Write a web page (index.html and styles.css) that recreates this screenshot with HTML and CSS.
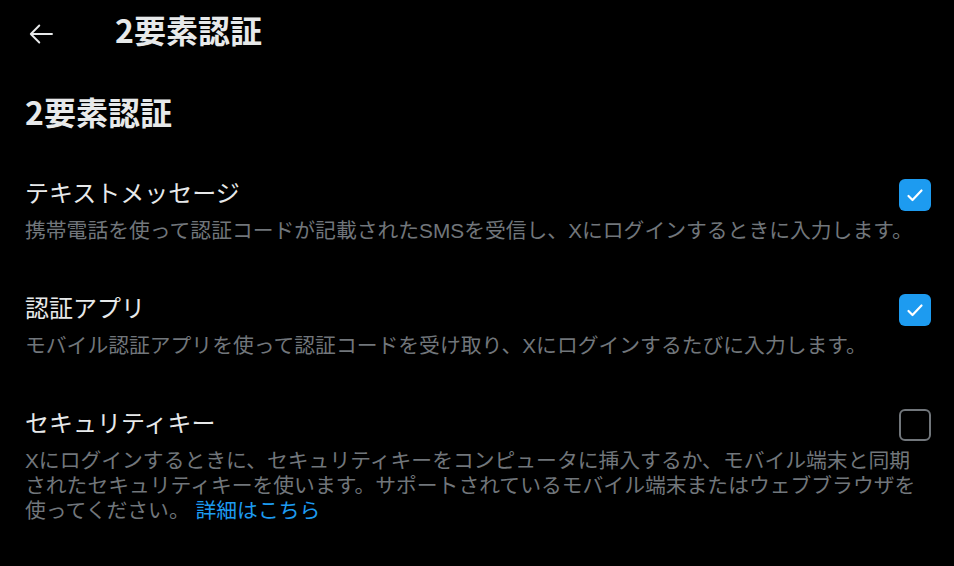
FILE: index.html
```html
<!DOCTYPE html>
<html lang="ja">
<head>
<meta charset="utf-8">
<title>2要素認証</title>
<link rel="stylesheet" href="styles.css">
</head>
<body>
<div class="page">
  <header class="topbar">
    <button class="back" aria-label="戻る">
      <svg width="24" height="20" viewBox="0 0 24 20" aria-hidden="true">
        <path d="M23 10H1.8M10.3 1.5L1.8 10l8.5 8.5" fill="none" stroke="#e7e9ea" stroke-width="1.9" stroke-linecap="round" stroke-linejoin="round"/>
      </svg>
    </button>
    <h1 class="topbar-title">2要素認証</h1>
  </header>

  <section class="settings">
    <h2 class="section-title">2要素認証</h2>

    <div class="option">
      <div class="option-head">
        <span class="option-title">テキストメッセージ</span>
        <span class="checkbox checked">
          <svg width="32" height="32" viewBox="0 0 32 32" aria-hidden="true"><path d="M9.5 17l4 4L22.5 11.5" fill="none" stroke="#fff" stroke-width="2.2" stroke-linecap="round" stroke-linejoin="round"/></svg>
        </span>
      </div>
      <p class="option-desc">携帯電話を使って認証コードが記載されたSMSを受信し、Xにログインするときに入力します。</p>
    </div>

    <div class="option">
      <div class="option-head">
        <span class="option-title">認証アプリ</span>
        <span class="checkbox checked">
          <svg width="32" height="32" viewBox="0 0 32 32" aria-hidden="true"><path d="M9.5 17l4 4L22.5 11.5" fill="none" stroke="#fff" stroke-width="2.2" stroke-linecap="round" stroke-linejoin="round"/></svg>
        </span>
      </div>
      <p class="option-desc">モバイル認証アプリを使って認証コードを受け取り、Xにログインするたびに入力します。</p>
    </div>

    <div class="option last">
      <div class="option-head">
        <span class="option-title">セキュリティキー</span>
        <span class="checkbox"></span>
      </div>
      <p class="option-desc">Xにログインするときに、セキュリティキーをコンピュータに挿入するか、モバイル端末と同期<br>されたセキュリティキーを使います。サポートされているモバイル端末またはウェブブラウザを<br>使ってください。 <a class="link" href="#">詳細はこちら</a></p>
    </div>
  </section>
</div>
</body>
</html>
```

FILE: styles.css
```css
* {
  box-sizing: border-box;
}

html, body {
  margin: 0;
  padding: 0;
  background: #000;
}

body {
  font-family: "Noto Sans CJK JP", "Noto Sans", sans-serif;
  color: #e7e9ea;
}

.page {
  width: 954px;
  min-height: 566px;
}

/* top navigation bar */
.topbar {
  height: 58px;
  display: flex;
  align-items: center;
  padding-left: 29px;
}

.back {
  width: 24px;
  height: 20px;
  padding: 0;
  margin: 10px 0 0 0;
  border: 0;
  background: none;
  display: flex;
  cursor: pointer;
}

.topbar-title {
  margin: 0 0 0 62px;
  font-size: 32px;
  font-weight: 700;
  line-height: 40px;
}

/* settings list */
.settings {
  padding-top: 33px;
  border-bottom: 1px solid #3a3c3f;
}

.section-title {
  margin: 0;
  padding: 0 25px;
  font-size: 32px;
  font-weight: 700;
  line-height: 40px;
}

.option {
  padding: 0 25px;
  margin-top: 45px;
}

.option + .option {
  margin-top: 48px;
}

.option.last {
  padding-bottom: 43px;
}

.option-head {
  display: flex;
  justify-content: space-between;
  align-items: flex-start;
}

.option-title {
  font-size: 24px;
  line-height: 32px;
}

.checkbox {
  width: 32px;
  height: 32px;
  margin: 3px -2px 0 0;
  border-radius: 6px;
  border: 2.5px solid #71767b;
  display: flex;
  align-items: center;
  justify-content: center;
}

.checkbox.checked {
  border: 0;
  background: #1d9bf0;
}

/* Latin face first keeps the tight line box; kana and kanji come from Noto CJK */
.option-desc {
  margin: 7px -20px 0 0;
  font-family: "Liberation Sans", "Noto Sans CJK JP", sans-serif;
  font-size: 20.8px;
  line-height: 25px;
  color: #71767b;
}

.link {
  color: #1d9bf0;
  text-decoration: none;
}
```
